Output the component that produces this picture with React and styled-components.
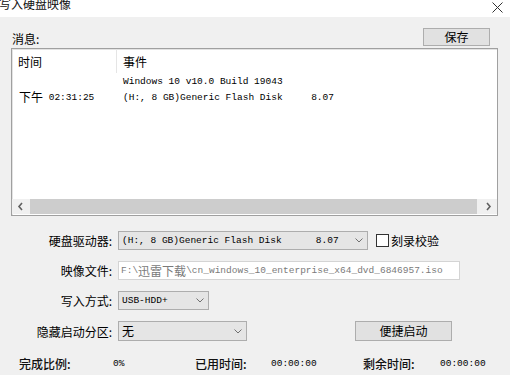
import React from 'react'
import styled, { createGlobalStyle } from 'styled-components'

const Global = createGlobalStyle`
  html, body { margin: 0; padding: 0; background: #f0f0f0; }
  * { box-sizing: border-box; }
`

const CJK = `"Noto Sans CJK SC", "Noto Sans", sans-serif`
const MONO = `"Liberation Mono", "Noto Sans CJK SC", monospace`

const Window = styled.div`
  width: 510px;
  height: 375px;
  overflow: hidden;
  background: #f0f0f0;
  font-family: ${CJK};
  font-size: 12px;
  color: #000;
  display: flex;
  flex-direction: column;
`

const TitleBar = styled.div`
  height: 17px;
  background: #fff;
  display: flex;
  justify-content: space-between;
  align-items: flex-start;
  overflow: hidden;
  flex-shrink: 0;
`

const Title = styled.div`
  font-size: 12px;
  line-height: 12px;
  margin-top: -2px;
  margin-left: -1px;
  color: #111;
`

const Close = styled.svg`
  margin: 2px 7px 0 0;
`

const Body = styled.div`
  padding: 0 12px 0 11px;
  display: flex;
  flex-direction: column;
`

const MsgHead = styled.div`
  margin-top: 11px;
  height: 18px;
  display: flex;
  justify-content: space-between;
  align-items: center;
`

const MsgLabel = styled.span`
  padding-left: 1px;
  margin-top: 3px;
`

const Button = styled.button`
  width: ${p => p.$w}px;
  height: ${p => p.$h || 18}px;
  margin-right: ${p => p.$mr || 0}px;
  margin-left: ${p => p.$ml || 0}px;
  border: 1px solid #adadad;
  background: #e1e1e1;
  font-family: ${CJK};
  font-size: 12px;
  line-height: 14px;
  color: #000;
  padding: 0;
`

const ListBox = styled.div`
  margin-top: 2px;
  height: 168px;
  background: #fff;
  border: 1px solid #a0a0a0;
  box-shadow: inset 1px 1px 0 #e3e3e3;
  display: flex;
  flex-direction: column;
`

const Row = styled.div`
  display: grid;
  grid-template-columns: 105px 1fr;
  height: ${p => p.$h}px;
  align-items: center;
`

const HeadCell = styled.div`
  padding-left: 6px;
  height: 100%;
  display: flex;
  align-items: center;
  border-right: ${p => (p.$div ? '1px solid #e5e5e5' : 'none')};
`

const Cell = styled.div`
  padding-left: ${p => p.$pl || 6}px;
  font-family: ${MONO};
  font-size: 9.5px;
  white-space: pre;
  display: flex;
  align-items: center;
  color: #000;
`

const Han = styled.span`
  font-family: ${CJK};
  font-size: 12px;
  line-height: 12px;
`

const Spacer = styled.div`
  flex: 1;
`

const HScroll = styled.div`
  height: 15px;
  margin: 0 0 1px 0;
  background: #f0f0f0;
  display: flex;
  align-items: stretch;
`

const ScrollBtn = styled.div`
  width: 17px;
  display: flex;
  align-items: center;
  justify-content: center;
`

const Thumb = styled.div`
  flex: 1;
  background: #cdcdcd;
  margin: 0 3px 0 1px;
`

const Form = styled.div`
  margin-top: 15px;
  display: flex;
  flex-direction: column;
  gap: 11px;
`

const FormRow = styled.div`
  display: flex;
  align-items: center;
  height: ${p => p.$h || 19}px;
`

const Label = styled.div`
  width: 101px;
  margin-right: 6px;
  text-align: right;
  white-space: nowrap;
`

const Combo = styled.div`
  width: ${p => p.$w}px;
  height: 100%;
  border: 1px solid #adadad;
  background: #e5e5e5;
  display: flex;
  align-items: center;
  justify-content: space-between;
  padding: 0 4px 0 3px;
  font-family: ${MONO};
  font-size: 9.5px;
  white-space: pre;
`

const TextBox = styled.div`
  width: ${p => p.$w}px;
  height: 100%;
  border: 1px solid #d4d4d4;
  background: #fff;
  display: flex;
  align-items: center;
  padding-left: 2px;
  font-family: ${MONO};
  font-size: 9.5px;
  color: #7a7a7a;
  white-space: pre;
  overflow: hidden;
`

const Check = styled.label`
  margin-left: 8px;
  display: flex;
  align-items: center;
  gap: 2px;
`

const Box = styled.span`
  width: 13px;
  height: 13px;
  border: 1px solid #333;
  background: #fff;
`

const Status = styled.div`
  margin-top: 14px;
  padding-left: 8px;
  height: 16px;
  display: grid;
  grid-template-columns: 94px 82px 76px 92px 77px auto;
  align-items: center;
`

const StatLabel = styled.span`
  color: #111;
  font-weight: 500;
`

const StatValue = styled.span`
  font-family: ${MONO};
  font-size: 9.5px;
`

function Chevron() {
  return (
    <svg width="8" height="5" viewBox="0 0 8 5">
      <path d="M0.5 0.5 L4 4 L7.5 0.5" fill="none" stroke="#707070" strokeWidth="1" />
    </svg>
  )
}

function Arrow({ dir }) {
  const d = dir === 'left' ? 'M5 1 L2 4.5 L5 8' : 'M2 1 L5 4.5 L2 8'
  return (
    <svg width="7" height="9" viewBox="0 0 7 9">
      <path d={d} fill="none" stroke="#606060" strokeWidth="1.6" />
    </svg>
  )
}

export default function App() {
  return (
    <>
      <Global />
      <Window>
        <TitleBar>
          <Title>写入硬盘映像</Title>
          <Close width="11" height="11" viewBox="0 0 11 11">
            <path d="M0.5 0.5 L10.5 10.5 M10.5 0.5 L0.5 10.5" stroke="#333" strokeWidth="1" />
          </Close>
        </TitleBar>
        <Body>
          <MsgHead>
            <MsgLabel>消息:</MsgLabel>
            <Button $w={67} $mr={8}>保存</Button>
          </MsgHead>
          <ListBox>
            <Row $h={24}>
              <HeadCell $div>时间</HeadCell>
              <HeadCell>事件</HeadCell>
            </Row>
            <Row $h={16}>
              <Cell />
              <Cell>Windows 10 v10.0 Build 19043</Cell>
            </Row>
            <Row $h={16}>
              <Cell $pl={7}><Han>下午</Han> 02:31:25</Cell>
              <Cell>{'(H:, 8 GB)Generic Flash Disk     8.07'}</Cell>
            </Row>
            <Spacer />
            <HScroll>
              <ScrollBtn><Arrow dir="left" /></ScrollBtn>
              <Thumb />
              <ScrollBtn><Arrow dir="right" /></ScrollBtn>
            </HScroll>
          </ListBox>
          <Form>
            <FormRow>
              <Label>硬盘驱动器:</Label>
              <Combo $w={250}>
                <span>{'(H:, 8 GB)Generic Flash Disk      8.07'}</span>
                <Chevron />
              </Combo>
              <Check><Box />刻录校验</Check>
            </FormRow>
            <FormRow>
              <Label>映像文件:</Label>
              <TextBox $w={342}>
                F:\<Han>迅雷下载</Han>\cn_windows_10_enterprise_x64_dvd_6846957.iso
              </TextBox>
            </FormRow>
            <FormRow>
              <Label>写入方式:</Label>
              <Combo $w={91}>
                <span>USB-HDD+</span>
                <Chevron />
              </Combo>
            </FormRow>
            <FormRow $h={20}>
              <Label>隐藏启动分区:</Label>
              <Combo $w={129}>
                <Han>无</Han>
                <Chevron />
              </Combo>
              <Button $w={97} $h={20} $ml={108}>便捷启动</Button>
            </FormRow>
          </Form>
          <Status>
            <StatLabel>完成比例:</StatLabel>
            <StatValue>0%</StatValue>
            <StatLabel>已用时间:</StatLabel>
            <StatValue>00:00:00</StatValue>
            <StatLabel>剩余时间:</StatLabel>
            <StatValue>00:00:00</StatValue>
          </Status>
        </Body>
      </Window>
    </>
  )
}
